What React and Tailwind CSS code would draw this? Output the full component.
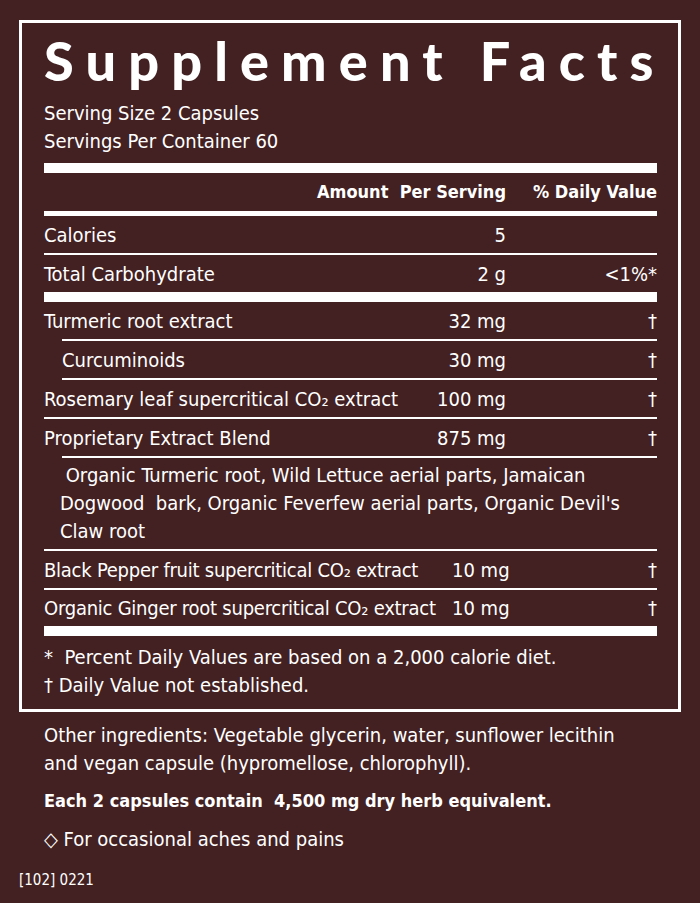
import React from "react";

const body = "font-['Liberation_Sans_Narrow','DejaVu_Sans_Condensed','Liberation_Sans',sans-serif]";

function Line({ indent }) {
  return <div className={"h-[2px] bg-white " + (indent ? "ml-[18px]" : "")} />;
}

function Row({ name, amount, dv, indent, h = "h-[37px]" }) {
  return (
    <div className={"flex items-center " + h + (indent ? " pl-[18px]" : "")}>
      <span className="flex-1 whitespace-nowrap">{name}</span>
      <span className="shrink-0 text-right whitespace-nowrap">{amount}</span>
      <span className="w-[151px] shrink-0 text-right">{dv}</span>
    </div>
  );
}

function FixedRow({ name, amount, h = "h-[37px]" }) {
  return (
    <div className={"flex items-center " + h}>
      <span className="w-[408px] shrink-0 whitespace-nowrap tracking-[-0.25px]">{name}</span>
      <span className="whitespace-nowrap">{amount}</span>
      <span className="flex-1 text-right">†</span>
    </div>
  );
}

export default function App() {
  return (
    <div className={"w-[700px] h-[903px] bg-[#432122] text-white pt-5 px-[19px] text-[20px] leading-[28px] " + body}>
      <div className="border-[3px] border-white pl-[22px] pr-[21px] pb-[10px]">
        <h1 className="font-['Lato',sans-serif] font-black text-[54px] leading-[70px] tracking-[0.225em] pt-[3px] whitespace-nowrap">
          Supplement Facts
        </h1>
        <div className="pt-[3px] pb-2">
          <p>Serving Size 2 Capsules</p>
          <p>Servings Per Container 60</p>
        </div>
        <div className="h-[10px] bg-white" />
        <div className="flex items-center h-[38px] font-bold text-[18px]">
          <span className="flex-1" />
          <span className="text-right">Amount&nbsp; Per Serving</span>
          <span className="w-[151px] text-right">% Daily Value</span>
        </div>
        <div className="h-[5px] bg-white" />
        <Row name="Calories" amount="5" dv="" />
        <Line />
        <Row name="Total Carbohydrate" amount="2 g" dv="<1%*" />
        <div className="h-[10px] bg-white" />
        <Row name="Turmeric root extract" amount="32 mg" dv="†" />
        <Line indent />
        <Row name="Curcuminoids" amount="30 mg" dv="†" indent />
        <Line indent />
        <Row name="Rosemary leaf supercritical CO₂ extract" amount="100 mg" dv="†" />
        <Line />
        <Row name="Proprietary Extract Blend" amount="875 mg" dv="†" />
        <Line indent />
        <div className="pt-[3px] pb-[4px] pl-[16px]">
          <p className="whitespace-nowrap">
            &nbsp;Organic Turmeric root, Wild Lettuce aerial parts, Jamaican
            <br />
            Dogwood&nbsp; bark, Organic Feverfew aerial parts, Organic Devil's
            <br />
            Claw root
          </p>
        </div>
        <Line />
        <FixedRow name="Black Pepper fruit supercritical CO₂ extract" amount="10 mg" />
        <Line />
        <FixedRow name="Organic Ginger root supercritical CO₂ extract" amount="10 mg" h="h-[36px]" />
        <div className="h-[10px] bg-white" />
        <div className="pt-[7px]">
          <p>*&nbsp; Percent Daily Values are based on a 2,000 calorie diet.</p>
          <p>† Daily Value not established.</p>
        </div>
      </div>
      <div className="pl-[25px] pt-[9px]">
        <p className="whitespace-nowrap">
          Other ingredients: Vegetable glycerin, water, sunflower lecithin
          <br />
          and vegan capsule (hypromellose, chlorophyll).
        </p>
        <p className="font-bold text-[18px] mt-[10px]">Each 2 capsules contain&nbsp; 4,500 mg dry herb equivalent.</p>
        <p className="mt-[10px]">◇ For occasional aches and pains</p>
      </div>
      <p className="text-[15px] leading-[20px] mt-[17px]">[102] 0221</p>
    </div>
  );
}
